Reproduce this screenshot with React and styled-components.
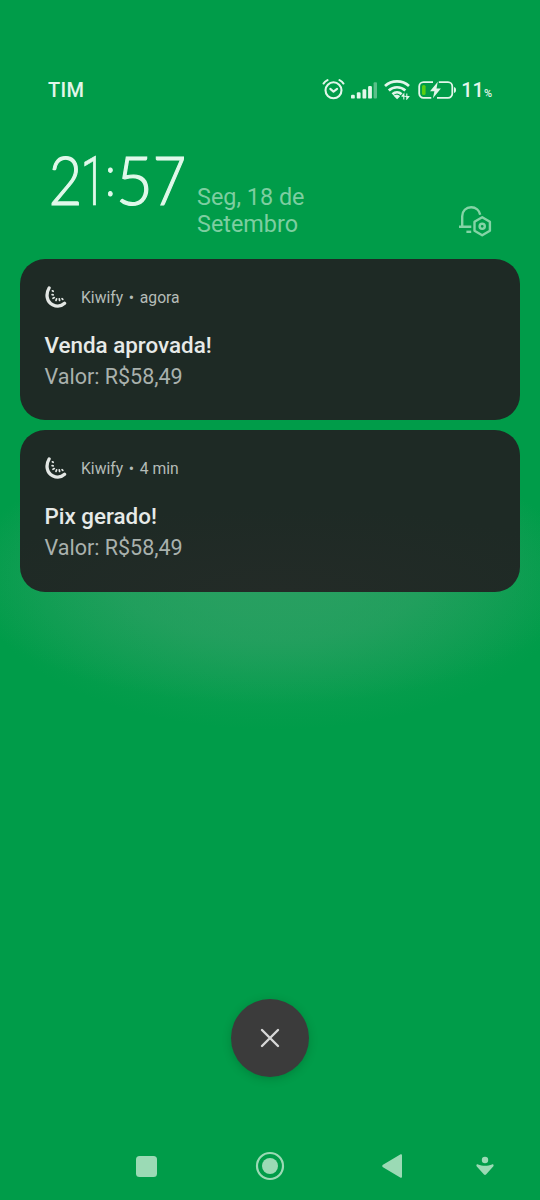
import styled, { createGlobalStyle } from "styled-components";

const GlobalStyle = createGlobalStyle`
  * {
    box-sizing: border-box;
  }
  body {
    margin: 0;
    background: #009c49;
    font-family: Roboto, "Noto Sans", sans-serif;
  }
  svg {
    display: block;
    flex: none;
  }
`;

const Screen = styled.main`
  width: 540px;
  height: 1200px;
  display: flex;
  flex-direction: column;
  overflow: hidden;
  background:
    radial-gradient(ellipse 300px 150px at 275px 580px, #30a06699 0%, #30a0668a 25%, #30a06640 60%, #30a06600 100%),
    radial-gradient(ellipse 310px 130px at 270px 575px, #2fa06599 0%, #2fa06588 50%, #2fa06540 77%, #2fa06500 100%),
    #009c49;
`;

const StatusBar = styled.header`
  height: 40px;
  margin-top: 70px;
  padding: 0 48px;
  display: flex;
  align-items: center;
  justify-content: space-between;
  color: #e2f6ea;
`;

const Carrier = styled.span`
  font-size: 20px;
  font-weight: 500;
  letter-spacing: 0.3px;
`;

const StatusIcons = styled.div`
  display: flex;
  align-items: center;
`;

const StatusGap = styled.span`
  width: ${({ $w }) => $w}px;
`;

const Percent = styled.span`
  margin-left: 4px;
  font-size: 20px;
  font-weight: 500;
  small {
    font-size: 11px;
  }
`;

const ClockRow = styled.section`
  height: 147.5px;
  padding: 36px 48px 0 50px;
  display: flex;
  align-items: flex-start;
`;

const Clock = styled.div`
  width: 147px;
  height: 70px;
  display: flex;
  color: #e0f8ea;
  font-size: 68px;
  line-height: 72px;
`;

const Digit = styled.span`
  width: ${({ $w }) => $w}px;
  display: flex;
  justify-content: center;
  font-family: Lato, Roboto, sans-serif;
  font-weight: 300;
  font-size: 67px;
  line-height: 66px;
  transform: scaleX(${({ $scale }) => $scale || 0.86});
  -webkit-text-stroke: 1.2px currentColor;
`;

const One = styled(Digit)`
  font-family: Roboto, sans-serif;
  font-size: 68px;
  line-height: 72px;
  transform: scaleX(0.65);
  -webkit-text-stroke: 0.6px currentColor;
`;

const Colon = styled(Digit)`
  font-family: Roboto, sans-serif;
  font-size: 54px;
  font-weight: 300;
  line-height: 64px;
  -webkit-text-stroke: 1px currentColor;
`;

const DateText = styled.div`
  width: 150px;
  padding-top: 37.5px;
  color: #7dcea0;
  font-size: 23.4px;
  line-height: 27.5px;
`;

const BellButton = styled.div`
  margin: 59px 0 0 auto;
`;

const CardList = styled.div`
  padding: 0 20px;
  margin-top: 1px;
  display: flex;
  flex-direction: column;
  gap: 10px;
`;

const Card = styled.article`
  height: 161.5px;
  padding: 25px 24.5px;
  border-radius: 25px;
  background: ${({ $lit }) =>
    $lit
      ? "radial-gradient(ellipse 330px 85px at 260px 161px, #232b27, #1e2a25)"
      : "#1e2a25"};
`;

const CardHead = styled.div`
  height: 26px;
  display: flex;
  align-items: center;
  gap: 12.5px;
  color: #b5bcb8;
  font-size: 15.7px;
`;

const Meta = styled.div`
  padding-top: 1px;
  display: flex;
  gap: 5.7px;
`;

const CardTitle = styled.h2`
  margin: 20px 0 0;
  color: #e7eae8;
  font-size: 22.4px;
  font-weight: 500;
  line-height: 31px;
`;

const CardBody = styled.p`
  margin: 0;
  color: #a9b1ad;
  font-size: 21.5px;
  line-height: 31px;
`;

const ClearButton = styled.button`
  width: 78px;
  height: 78px;
  margin: auto auto 0 230.5px;
  padding: 0;
  display: grid;
  place-items: center;
  border: 0;
  border-radius: 50%;
  background: #3b3b3b;
  box-shadow: 0 2px 9px rgba(0, 50, 20, 0.25);
`;

const NavBar = styled.nav`
  height: 68px;
  margin-top: 55.5px;
  padding: 0 46px 0 136px;
  display: flex;
  align-items: center;
  color: #9bdab5;
`;

const NavItem = styled.span`
  width: ${({ $w }) => $w}px;
`;

const AlarmIcon = () => (
  <svg width="23" height="22" viewBox="0 0 23 22" fill="none" stroke="currentColor" strokeWidth="2.1" strokeLinecap="round">
    <circle cx="11.5" cy="11.3" r="8" />
    <path d="M1.6 4.5C2.5 2.9 3.8 1.9 5.5 1.1M21.4 4.5c-.9-1.6-2.2-2.6-3.9-3.4" />
    <path d="m8.3 9.9 3.2 2.7 3.6-2.7" strokeLinejoin="round" />
  </svg>
);

const SignalIcon = () => (
  <svg width="27" height="17" viewBox="0 0 27 17" fill="currentColor">
    <rect x="0" y="12.8" width="3.8" height="3.8" rx="1.2" />
    <rect x="5.8" y="10.3" width="3.8" height="6.3" rx="1.2" />
    <rect x="11.5" y="7.2" width="3.8" height="9.4" rx="1.2" />
    <rect x="17.1" y="4" width="3.8" height="12.6" rx="1.2" />
    <rect x="22.6" y="0.3" width="3.4" height="16.3" rx="1" opacity="0.4" />
  </svg>
);

const WifiIcon = () => (
  <svg width="26" height="20" viewBox="0 0 26 20" fill="none" stroke="currentColor" strokeWidth="2.7">
    <path d="M1 6.1c6.5-6.2 17.5-6.2 24 0" />
    <path d="M4.8 10.4c4.5-4.2 12-4.2 16.5 0" />
    <path d="M8.5 14.2c2.6-2.4 6.5-2.4 9.1 0" />
    <path d="m9.3 15.6 3.8 3.6 3-3c-1.8-1.6-5-1.8-6.8-.6Z" fill="currentColor" stroke="none" />
    <path d="M19.8 19.5V14l-1.8 2.2M22.8 13.5V19l1.8-2.2M17.5 16.3h4M21.5 16.5h4" strokeWidth="1.1" />
  </svg>
);

const BatteryIcon = () => (
  <svg width="39" height="18" viewBox="0 0 39 18" fill="none">
    <path
      d="M15 1.2H5.5A4.3 4.3 0 0 0 1.2 5.5v7a4.3 4.3 0 0 0 4.3 4.3h7.8M20.8 1.2h9.2a4.3 4.3 0 0 1 4.3 4.3v7a4.3 4.3 0 0 1-4.3 4.3H19"
      stroke="currentColor"
      strokeWidth="1.8"
    />
    <rect x="4" y="4" width="3.6" height="10" rx="1.6" fill="#58ce12" />
    <path d="M19.8 0.8 12 10.2h4.4l-1.5 7 8-9.8h-4.4Z" fill="currentColor" />
    <path d="M36 6c1.5.4 2 1.4 2 3s-.5 2.6-2 3Z" fill="currentColor" />
  </svg>
);

const BellIcon = () => (
  <svg width="34" height="32" viewBox="0 0 34 32" fill="none" stroke="#84d4a6" strokeWidth="2.4">
    <path d="M13.3 21.8H1M4.2 21.8V11.2c0-5.2 3.8-9 9-9 4.6 0 8.2 3.1 9 7.5" />
    <path d="M8.4 26.8h4.8" />
    <path d="m24.2 12.3 7.7 4.5v9l-7.7 4.5-7.7-4.5v-9Z" strokeLinejoin="round" />
    <circle cx="24.2" cy="21.3" r="2.6" />
  </svg>
);

const KiwiIcon = () => (
  <svg width="24" height="24" viewBox="0 0 24 24" fill="none" stroke="#e3e7e4" strokeLinecap="round">
    <path d="M4.1 3C.4 9.3 1.8 16.9 7.6 19.8c4.2 2.1 8.9 1.4 12-1.5" strokeWidth="3.3" />
    <path d="m8.2 6.3-.8-.5M8.2 9.8l-1.1-.1M9.3 12.6l-1.3.7M11.6 13.9l-.6 1.5M14.3 13.9l.3 1.6M17 13.7l.8.7" strokeWidth="1.7" />
  </svg>
);

const notifications = [
  { title: "Venda aprovada!", body: "Valor: R$58,49", time: "agora" },
  { title: "Pix gerado!", body: "Valor: R$58,49", time: "4 min" },
];

const Notification = ({ title, body, time, lit }) => (
  <Card $lit={lit}>
    <CardHead>
      <KiwiIcon />
      <Meta>
        <span>Kiwify</span>
        <span>•</span>
        <span>{time}</span>
      </Meta>
    </CardHead>
    <CardTitle>{title}</CardTitle>
    <CardBody>{body}</CardBody>
  </Card>
);

export default function App() {
  return (
    <>
      <GlobalStyle />
      <Screen>
        <StatusBar>
          <Carrier>TIM</Carrier>
          <StatusIcons>
            <AlarmIcon />
            <StatusGap $w={6} />
            <SignalIcon />
            <StatusGap $w={6} />
            <WifiIcon />
            <StatusGap $w={8} />
            <BatteryIcon />
            <Percent>
              11<small>%</small>
            </Percent>
          </StatusIcons>
        </StatusBar>
        <ClockRow>
          <Clock>
            <Digit $w={31}>2</Digit>
            <One $w={24}>1</One>
            <Colon $w={11}>:</Colon>
            <Digit $w={37} $scale={0.95}>
              5
            </Digit>
            <Digit $w={33}>7</Digit>
          </Clock>
          <DateText>
            Seg, 18 de
            <br />
            Setembro
          </DateText>
          <BellButton>
            <BellIcon />
          </BellButton>
        </ClockRow>
        <CardList>
          {notifications.map((n, i) => (
            <Notification key={n.title} {...n} lit={i === 1} />
          ))}
        </CardList>
        <ClearButton aria-label="Limpar">
          <svg width="20" height="20" viewBox="0 0 20 20" stroke="#d8d8d8" strokeWidth="2.4" strokeLinecap="round">
            <path d="m2 2 16 16M18 2 2 18" />
          </svg>
        </ClearButton>
        <NavBar>
          <NavItem $w={119}>
            <svg width="21" height="21" viewBox="0 0 21 21" fill="currentColor">
              <rect width="21" height="21" rx="3.5" />
            </svg>
          </NavItem>
          <NavItem $w={127}>
            <svg width="30" height="30" viewBox="0 0 30 30" fill="none">
              <circle cx="15" cy="15" r="13" stroke="currentColor" strokeWidth="2.2" />
              <circle cx="15" cy="15" r="8" fill="currentColor" />
            </svg>
          </NavItem>
          <NavItem $w={94}>
            <svg width="21" height="26" viewBox="0 0 21 26" fill="currentColor">
              <path d="M1 11.7 18.2 1.4c1-.6 1.8-.1 1.8 1v21.2c0 1.1-.8 1.6-1.8 1L1 14.3c-1-.7-1-1.9 0-2.6Z" />
            </svg>
          </NavItem>
          <svg width="18" height="20" viewBox="0 0 18 20" fill="currentColor">
            <circle cx="9" cy="4" r="3.2" />
            <path d="M2 8.4c4.3 1.8 9.7 1.8 14 0 1.4-.4 2.1.9 1.2 2L10 18.5c-.6.6-1.4.6-2 0L.8 10.4C-.1 9.3.6 8 2 8.4Z" />
          </svg>
        </NavBar>
      </Screen>
    </>
  );
}
